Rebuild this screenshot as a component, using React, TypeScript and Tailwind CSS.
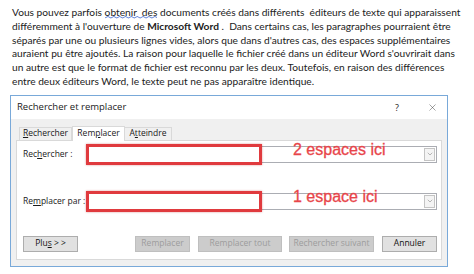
import { X, ChevronDown } from "lucide-react";

function Squiggle({ children }: { children: React.ReactNode }) {
  return (
    <span className="relative">
      {children}
      <svg className="absolute left-0 bottom-[-1px] w-full h-[3px]" viewBox="0 0 36 3" preserveAspectRatio="none">
        <path d="M0 2 L2 0.5 L4 2 L6 0.5 L8 2 L10 0.5 L12 2 L14 0.5 L16 2 L18 0.5 L20 2 L22 0.5 L24 2 L26 0.5 L28 2 L30 0.5 L32 2 L34 0.5 L36 2" fill="none" stroke="#5b7fd6" strokeWidth="0.8" />
      </svg>
    </span>
  );
}

const PARA = [
  <>Vous pouvez parfois <Squiggle>obtenir&nbsp; des</Squiggle> documents créés dans différents&nbsp; éditeurs de texte qui apparaissent</>,
  <>différemment à l'ouverture de <b>Microsoft Word</b> .&nbsp; Dans certains cas, les paragraphes pourraient être</>,
  <>séparés par une ou plusieurs lignes vides, alors que dans d'autres cas, des espaces supplémentaires</>,
  <>auraient pu être ajoutés. La raison pour laquelle le fichier créé dans un éditeur Word s'ouvrirait dans</>,
  <>un autre est que le format de fichier est reconnu par les deux. Toutefois, en raison des différences</>,
  <>entre deux éditeurs Word, le texte peut ne pas apparaître identique.</>,
];

function Combo({ note }: { note: string }) {
  return (
    <div className="relative flex-1 h-[17px] bg-white border border-[#abadb3] flex justify-end items-center pr-[1px]">
      <div className="w-[11px] h-[13px] border border-[#c4c4c4] bg-[#f4f4f4] flex items-center justify-center">
        <ChevronDown size={8} strokeWidth={1.5} className="text-[#777]" />
      </div>
      {/* annotation drawn over the screenshot */}
      <div className="absolute left-[-1px] top-[-3px] w-[176px] h-[21px] border-[3px] border-[#e03a3e] shadow-[0_0_2px_rgba(180,0,0,0.4)]" />
      <span className="absolute left-[206px] top-[-6px] text-[16px] leading-[18px] text-[#e8454a] whitespace-nowrap font-['Liberation_Sans',Arial,sans-serif] [-webkit-text-stroke:0.3px_#e8454a]">
        {note}
      </span>
    </div>
  );
}

function Btn({ label, w, disabled }: { label: React.ReactNode; w: string; disabled?: boolean }) {
  return (
    <div
      className={`${w} h-[16px] flex items-center justify-center border text-[8.5px] ${
        disabled ? "bg-[#cccccc] border-[#bfbfbf] text-[#9c9c9c]" : "bg-[#e1e1e1] border-[#adadad] text-[#111]"
      }`}
    >
      {label}
    </div>
  );
}

export default function App() {
  return (
    <div className="w-[474px] h-[274px] bg-white overflow-hidden">
      <div className="pt-[6px] pl-[12px] text-[10.2px] leading-[13.8px] text-[#222] font-['Lato',sans-serif] whitespace-nowrap">
        {PARA.map((line, i) => (
          <div key={i}>{line}</div>
        ))}
      </div>

      <div className="ml-[10px] mt-[6px] w-[438px] h-[172px] border border-[#79a9d9] bg-[#f0f0f0] flex flex-col font-['Open_Sans',sans-serif] text-[#1a1a1a]">
        <div className="h-[23px] bg-white flex items-center pl-[6px] pr-[9px] text-[9.5px]">
          <span className="flex-1">Rechercher et remplacer</span>
          <span className="mr-[28px] text-[9px]">?</span>
          <X size={11} strokeWidth={1} className="text-[#333]" />
        </div>

        <div className="flex-1 px-[5px] pt-[6px] pb-[6px] flex flex-col">
          <div className="flex items-end pl-[3px] h-[15px] text-[8.5px]">
            <div className="w-[53px] h-[13px] border border-b-0 border-[#d9d9d9] bg-[#f0f0f0] flex items-center justify-center">
              <span><u>R</u>echercher</span>
            </div>
            <div className="w-[53px] h-[15px] border border-b-0 border-[#d9d9d9] bg-white flex items-center justify-center -mb-[1px] relative">
              <span>Rem<u>p</u>lacer</span>
            </div>
            <div className="w-[47px] h-[13px] border border-b-0 border-l-0 border-[#d9d9d9] bg-[#f0f0f0] flex items-center justify-center">
              <span>A<u>t</u>teindre</span>
            </div>
          </div>

          <div className="flex-1 bg-white border border-[#d9d9d9] pl-[6px] pr-[4px] pt-[5px] flex flex-col text-[8.5px]">
            <div className="flex items-center h-[17px]">
              <span className="w-[63px]">Rec<u>h</u>ercher :</span>
              <Combo note="2 espaces ici" />
            </div>
            <div className="flex items-center h-[17px] mt-[30px]">
              <span className="w-[63px]">Re<u>m</u>placer par :</span>
              <Combo note="1 espace ici" />
            </div>
            <div className="flex items-center mt-[26px]">
              <Btn w="w-[55px]" label={<span>Plu<u>s</u> &gt; &gt;</span>} />
              <div className="w-[57px]" />
              <Btn w="w-[55px]" label="Remplacer" disabled />
              <div className="w-[8px]" />
              <Btn w="w-[84px]" label="Remplacer tout" disabled />
              <div className="w-[7px]" />
              <Btn w="w-[85px]" label="Rechercher suivant" disabled />
              <div className="w-[8px]" />
              <Btn w="w-[55px]" label="Annuler" />
            </div>
          </div>
        </div>
      </div>
    </div>
  );
}
